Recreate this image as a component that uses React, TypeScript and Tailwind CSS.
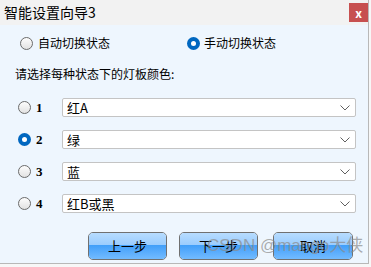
import React from "react";

const cjk = { fontFamily: '"Noto Sans CJK SC", "Noto Sans", sans-serif' };

function Radio({ checked }: { checked?: boolean }) {
  if (checked) {
    return (
      <span className="flex h-[13px] w-[13px] shrink-0 items-center justify-center rounded-full bg-[#0067c0]">
        <span className="h-[5px] w-[5px] rounded-full bg-white" />
      </span>
    );
  }
  return (
    <span className="h-[13px] w-[13px] shrink-0 rounded-full border border-[#6b6b6b] bg-gradient-to-b from-[#fdfdfd] to-[#e2e2e2]" />
  );
}

function Chevron() {
  return (
    <svg width="10" height="6" viewBox="0 0 10 6" className="shrink-0">
      <path d="M0.5 0.5 L5 5 L9.5 0.5" fill="none" stroke="#606060" strokeWidth="1" />
    </svg>
  );
}

function ColorRow({ num, value, checked }: { num: string; value: string; checked?: boolean }) {
  return (
    <div className="flex h-[19px] items-center pl-[18px]">
      <Radio checked={checked} />
      <span
        className="ml-[5px] w-[26px] text-[13px] font-bold text-black"
        style={{ fontFamily: '"Liberation Serif", serif' }}
      >
        {num}
      </span>
      <div className="flex h-[19px] w-[294px] items-center justify-between rounded-[2px] border border-[#c4c4c4] bg-white pl-[4px] pr-[5px]">
        <span className="text-[13px] leading-none text-black">{value}</span>
        <Chevron />
      </div>
    </div>
  );
}

function WizardButton({ label, className }: { label: string; className?: string }) {
  return (
    <button
      className={
        "relative flex h-[28px] items-center justify-center overflow-hidden rounded-[5px] border border-[#707070] text-[13px] text-black " +
        (className ?? "")
      }
    >
      <span className="absolute inset-x-0 top-0 h-[13px] bg-gradient-to-b from-[#b7dcff] to-[#98cbfd]" />
      <span className="absolute inset-x-0 bottom-0 h-[14px] bg-gradient-to-b from-[#3f9ef9] to-[#72bbff]" />
      <span className="relative">{label}</span>
    </button>
  );
}

export default function App() {
  return (
    <div className="h-[267px] w-[371px] overflow-hidden bg-[#f7f7f7]" style={cjk}>
      <div className="relative flex h-[264px] w-[369px] flex-col border-r border-b border-[#b8b8b8] bg-[#eef6fe]">
        <div className="flex h-[25px] items-start justify-between bg-[#f2f2f2]">
          <span className="pl-[4px] pt-[3px] text-[14px] leading-[18px] text-black">智能设置向导3</span>
          <span className="mt-[3px] flex h-[19px] w-[19px] items-center justify-center bg-[#c75050] text-[12px] font-bold leading-none text-white">
            x
          </span>
        </div>

        <div className="mt-[8px] flex h-[20px] items-center text-[12px] text-black">
          <div className="flex w-[167px] items-center pl-[20px]">
            <Radio />
            <span className="ml-[5px]">自动切换状态</span>
          </div>
          <div className="flex items-center pl-[20px]">
            <Radio checked />
            <span className="ml-[4px]">手动切换状态</span>
          </div>
        </div>

        <div className="mt-[11px] h-[20px] pl-[15px] text-[12px] leading-[20px] text-black">
          请选择每种状态下的灯板颜色:
        </div>

        <div className="mt-[14px] flex flex-col gap-[13px]">
          <ColorRow num="1" value="红A" />
          <ColorRow num="2" value="绿" checked />
          <ColorRow num="3" value="蓝" />
          <ColorRow num="4" value="红B或黑" />
        </div>

        <div className="mt-[19px] flex pl-[88px]">
          <WizardButton label="上一步" className="w-[79px]" />
          <WizardButton label="下一步" className="ml-[12px] w-[79px]" />
          <WizardButton label="取消" className="ml-[15px] w-[80px]" />
        </div>

        <span
          className="pointer-events-none absolute left-[207px] top-[234px] whitespace-nowrap text-[17px] leading-[24px] text-[#8a8a8a]/70"
          style={{ fontFamily: '"Liberation Sans", "Noto Sans CJK SC", sans-serif' }}
        >
          CSDN @mango大侠
        </span>
      </div>
    </div>
  );
}
